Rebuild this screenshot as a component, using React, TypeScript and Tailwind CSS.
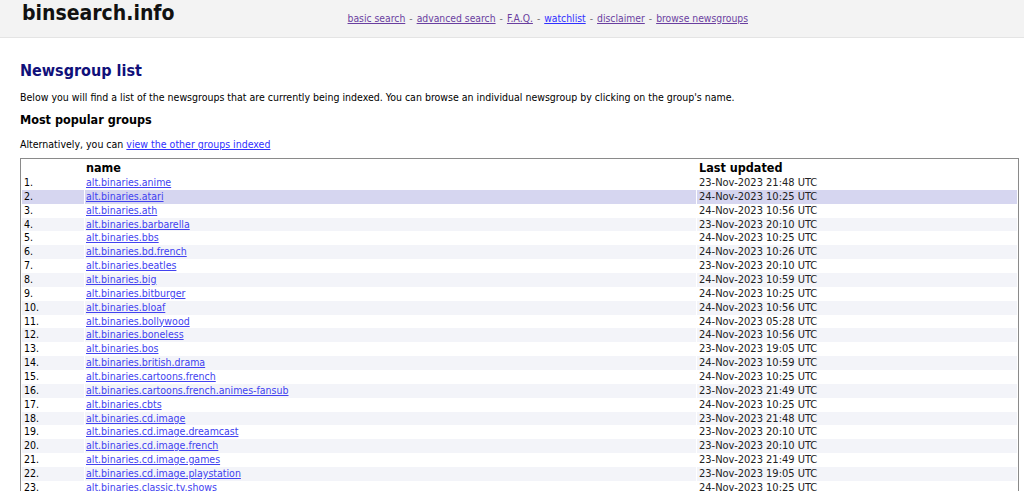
import React from 'react';

const groups: [string, string][] = [
  ['alt.binaries.anime', '23-Nov-2023 21:48 UTC'],
  ['alt.binaries.atari', '24-Nov-2023 10:25 UTC'],
  ['alt.binaries.ath', '24-Nov-2023 10:56 UTC'],
  ['alt.binaries.barbarella', '23-Nov-2023 20:10 UTC'],
  ['alt.binaries.bbs', '24-Nov-2023 10:25 UTC'],
  ['alt.binaries.bd.french', '24-Nov-2023 10:26 UTC'],
  ['alt.binaries.beatles', '23-Nov-2023 20:10 UTC'],
  ['alt.binaries.big', '24-Nov-2023 10:59 UTC'],
  ['alt.binaries.bitburger', '24-Nov-2023 10:25 UTC'],
  ['alt.binaries.bloaf', '24-Nov-2023 10:56 UTC'],
  ['alt.binaries.bollywood', '24-Nov-2023 05:28 UTC'],
  ['alt.binaries.boneless', '24-Nov-2023 10:56 UTC'],
  ['alt.binaries.bos', '23-Nov-2023 19:05 UTC'],
  ['alt.binaries.british.drama', '24-Nov-2023 10:59 UTC'],
  ['alt.binaries.cartoons.french', '24-Nov-2023 10:25 UTC'],
  ['alt.binaries.cartoons.french.animes-fansub', '23-Nov-2023 21:49 UTC'],
  ['alt.binaries.cbts', '24-Nov-2023 10:25 UTC'],
  ['alt.binaries.cd.image', '23-Nov-2023 21:48 UTC'],
  ['alt.binaries.cd.image.dreamcast', '23-Nov-2023 20:10 UTC'],
  ['alt.binaries.cd.image.french', '23-Nov-2023 20:10 UTC'],
  ['alt.binaries.cd.image.games', '23-Nov-2023 21:49 UTC'],
  ['alt.binaries.cd.image.playstation', '23-Nov-2023 19:05 UTC'],
  ['alt.binaries.classic.tv.shows', '24-Nov-2023 10:25 UTC'],
  ['alt.binaries.comics.dcp', '24-Nov-2023 10:56 UTC'],
  ['alt.binaries.console.ps3', '24-Nov-2023 10:25 UTC'],
];

const navLinks = [
  { label: 'basic search', visited: true },
  { label: 'advanced search', visited: true },
  { label: 'F.A.Q.', visited: true },
  { label: 'watchlist', visited: false },
  { label: 'disclaimer', visited: true },
  { label: 'browse newsgroups', visited: true },
];

const App = () => {
  return (
    <div className="min-h-screen w-full bg-white font-['DejaVu_Sans_Condensed','DejaVu_Sans',Verdana,sans-serif] text-[10.5px] text-black">
      <header className="flex h-[38px] items-start border-b border-[#e4e4e4] bg-[#f3f3f3]">
        <a className="ml-[22px] mt-[0px] text-[21px] font-bold leading-[26px] text-[#111]">binsearch.info</a>
        <nav className="ml-[173px] mt-[11px] flex items-center gap-[4px] text-[10.3px] leading-[14px]">
          {navLinks.map((l, i) => (
            <React.Fragment key={l.label}>
              {i > 0 && <span className="text-[#777]">-</span>}
              <a
                href="#"
                className={
                  l.visited
                    ? 'text-[#6a3fa0] underline'
                    : 'text-[#3030ff] underline'
                }
              >
                {l.label}
              </a>
            </React.Fragment>
          ))}
        </nav>
      </header>

      <main className="pl-5 pr-[5px] pt-[23px]">
        <h1 className="text-[16px] font-bold leading-[20px] text-[#10107a]">Newsgroup list</h1>
        <p className="mt-[9px] leading-[14px]">
          Below you will find a list of the newsgroups that are currently being indexed. You can
          browse an individual newsgroup by clicking on the group's name.
        </p>
        <h2 className="mt-[7px] text-[12.5px] font-bold leading-[18px]">Most popular groups</h2>
        <p className="mt-[8px] leading-[14px]">
          Alternatively, you can{' '}
          <a href="#" className="text-[#3030ff] underline">
            view the other groups indexed
          </a>
        </p>

        <div className="mt-[7px] border border-[#8a8a8a] px-px">
          <div className="grid h-[17px] grid-cols-[62px_611px_1fr] gap-x-px text-[12.5px] font-bold leading-[18px]">
            <div />
            <div className="pl-px">name</div>
            <div className="pl-[2px]">Last updated</div>
          </div>
          {groups.map(([name, date], i) => {
            const bg = i === 1 ? 'bg-[#d6d6f0]' : i % 2 === 1 ? 'bg-[#f3f4f9]' : 'bg-white';
            return (
              <div
                key={name}
                className="grid h-[13.86px] grid-cols-[62px_611px_1fr] gap-x-px leading-[13.86px]"
              >
                <div className={`${bg} pl-[2px]`}>{i + 1}.</div>
                <div className={`${bg} pl-px`}>
                  <a href="#" className="text-[#4242f0] underline">
                    {name}
                  </a>
                </div>
                <div className={`${bg} pl-[2px] text-[11px] text-[#222]`}>{date}</div>
              </div>
            );
          })}
        </div>
      </main>
    </div>
  );
};

export default App;
